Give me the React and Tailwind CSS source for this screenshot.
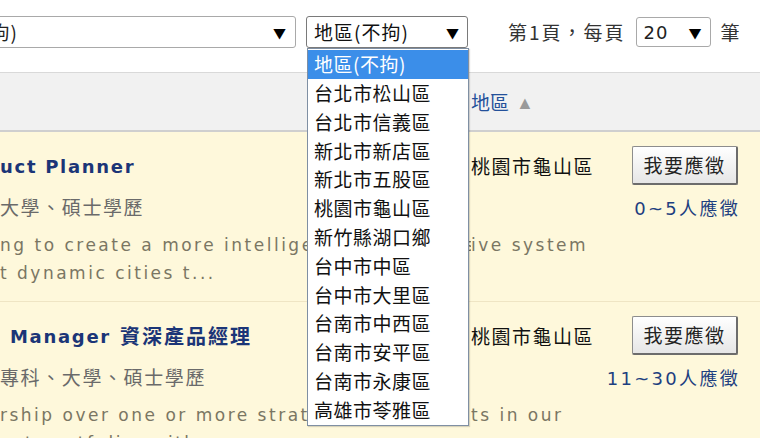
import React from "react";

const CJK = "font-['Noto_Sans_CJK_TC','Noto_Sans_CJK_SC',sans-serif]";
const LAT = "font-['DejaVu_Sans','Noto_Sans_CJK_TC',sans-serif]";

const regions = [
  "地區(不拘)",
  "台北市松山區",
  "台北市信義區",
  "新北市新店區",
  "新北市五股區",
  "桃園市龜山區",
  "新竹縣湖口鄉",
  "台中市中區",
  "台中市大里區",
  "台南市中西區",
  "台南市安平區",
  "台南市永康區",
  "高雄市苓雅區",
];

function Arrow() {
  return <span className="text-[13px] leading-none text-black">▼</span>;
}

function JobRow({ title, titleCjk, titlePad, edu, line1a, line1b, line2, count }) {
  return (
    <div className="h-[170px] border-b border-[#efe5c4] bg-[#fef8db] pt-[14px]">
      <div className="flex">
        <div className="w-[471px] shrink-0">
          <div className={`h-[40px] flex items-center whitespace-nowrap ${titlePad}`}>
            <span className={`${LAT} font-bold text-[18px] tracking-[1.7px] text-[#1b3577]`}>{title}</span>
            {titleCjk && (
              <span className={`${CJK} font-bold text-[20px] tracking-[2px] text-[#1b3577] ml-[9px]`}>{titleCjk}</span>
            )}
          </div>
          <div className={`h-[42px] flex items-center whitespace-nowrap ${CJK} text-[19px] tracking-[1.6px] text-[#6a6a6a]`}>
            {edu}
          </div>
        </div>
        <div className="w-[161px] shrink-0">
          <div className={`h-[40px] flex items-center ${CJK} text-[19px] tracking-[1.5px] text-[#111]`}>桃園市龜山區</div>
        </div>
        <div className="w-[106px] shrink-0 flex flex-col items-end">
          <button className={`w-[106px] h-[39px] rounded-[2px] border border-[#8d8d8d] border-r-[2px] border-b-[2px] border-r-[#6c6c6c] border-b-[#6c6c6c] bg-gradient-to-b from-[#ffffff] to-[#e6e6e6] ${CJK} text-[19px] tracking-[1.5px] text-[#222] flex items-center justify-center`}>
            我要應徵
          </button>
          <div className={`h-[46px] flex items-center ${LAT} text-[18px] tracking-[2.3px] text-[#1d3f80] whitespace-nowrap mr-[-2px]`}>
            {count}
          </div>
        </div>
      </div>
      <div className={`${LAT} text-[17px] tracking-[2.5px] text-[#7a7663] leading-[28px] whitespace-nowrap`}>
        <div className="flex">
          <span className="w-[471px] shrink-0 overflow-hidden">{line1a}</span>
          <span>{line1b}</span>
        </div>
        <div>{line2}</div>
      </div>
    </div>
  );
}

export default function App() {
  return (
    <div className="relative w-[760px] h-[438px] overflow-hidden bg-white">
      {/* toolbar */}
      <div className={`h-[73px] border-b border-[#d9d9d9] flex items-start pt-[16px] ${CJK} text-[19px] text-[#222]`}>
        <div className="ml-[-126px] w-[422px] h-[32px] shrink-0 border border-[#a9a9a9] rounded-[3px] bg-white flex items-center justify-between pl-[8px] pr-[9px] whitespace-nowrap">
          <span className="tracking-[1px]">職務類別(不拘)</span>
          <Arrow />
        </div>
        <div className="ml-[10px] w-[162px] h-[32px] shrink-0 border border-[#7a7a7a] rounded-[3px] bg-white flex items-center justify-between pl-[7px] pr-[8px] whitespace-nowrap">
          <span className="text-[#111] tracking-[1px]">地區(不拘)</span>
          <Arrow />
        </div>
        <div className="ml-[40px] h-[32px] flex items-center text-[#333] tracking-[2px] whitespace-nowrap">第1頁，每頁</div>
        <div className="ml-[10px] w-[75px] h-[30px] mt-[1px] shrink-0 border border-[#a9a9a9] rounded-[3px] bg-white flex items-center justify-between pl-[7px] pr-[8px]">
          <span className={`${LAT} text-[18px] tracking-[1px] text-[#222]`}>20</span>
          <Arrow />
        </div>
        <div className="ml-[10px] h-[32px] flex items-center text-[#333]">筆</div>
      </div>

      {/* header */}
      <div className="h-[59px] bg-[#f1f1f1] border-b-[2px] border-[#cfcfcf] flex items-center">
        <div className="ml-[471px] flex items-center gap-[7px] pt-[1px]">
          <span className={`${CJK} text-[19px] text-[#23509a]`}>地區</span>
          <span className="text-[18px] text-[#9a9a9a] leading-none">▲</span>
        </div>
      </div>

      <JobRow
        title="uct Planner"
        titlePad="pl-0"
        edu="大學、碩士學歷"
        line1a="ng to create a more intelligent and respons"
        line1b="ive system"
        line2="t dynamic cities t..."
        count="0~5人應徵"
      />
      <JobRow
        title="Manager"
        titleCjk="資深產品經理"
        titlePad="pl-[10px]"
        edu="專科、大學、碩士學歷"
        line1a="rship over one or more strategic produc"
        line1b="ts in our"
        line2="uct portfolio, with a..."
        count="11~30人應徵"
      />

      {/* open dropdown list */}
      <div className={`absolute z-10 left-[307px] top-[48px] w-[162px] border border-[#7f8fa3] bg-white py-[1px] shadow-[1px_1px_1px_rgba(0,0,0,0.15)] ${CJK} text-[19px]`}>
        {regions.map((r, i) => (
          <div
            key={r}
            className={`h-[28.8px] flex items-center pl-[6px] tracking-[0.5px] whitespace-nowrap ${i === 0 ? "bg-[#3b8ee9] text-white" : "text-[#111]"}`}
          >
            {r}
          </div>
        ))}
      </div>
    </div>
  );
}
